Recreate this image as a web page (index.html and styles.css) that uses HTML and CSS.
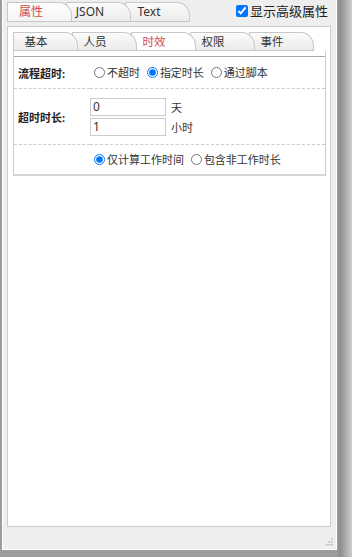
FILE: index.html
```html
<!DOCTYPE html>
<html lang="zh">
<head>
  <meta charset="UTF-8" />
  <title>属性</title>
  <link rel="stylesheet" href="styles.css">
</head>
<body>
  <div class="dialog">
    <div class="top">
      <div class="tabs">
        <span class="tab active">属性</span>
        <span class="tab">JSON</span>
        <span class="tab">Text</span>
      </div>
      <label class="adv"><input type="checkbox" checked>显示高级属性</label>
    </div>

    <div class="panel">
      <div class="tabs inner">
        <span class="tab">基本</span>
        <span class="tab">人员</span>
        <span class="tab active">时效</span>
        <span class="tab">权限</span>
        <span class="tab">事件</span>
      </div>

      <div class="tab-body">
        <table class="form">
          <tr class="row-1">
            <th>流程超时:</th>
            <td>
              <label class="opt"><input type="radio" name="timeout">不超时</label>
              <label class="opt"><input type="radio" name="timeout" checked>指定时长</label>
              <label class="opt"><input type="radio" name="timeout">通过脚本</label>
            </td>
          </tr>
          <tr class="row-2">
            <th>超时时长:</th>
            <td>
              <div class="dur"><input type="text" value="0"><span>天</span></div>
              <div class="dur"><input type="text" value="1"><span>小时</span></div>
            </td>
          </tr>
          <tr class="row-3">
            <th></th>
            <td>
              <label class="opt"><input type="radio" name="work" checked>仅计算工作时间</label>
              <label class="opt"><input type="radio" name="work">包含非工作时长</label>
            </td>
          </tr>
        </table>
      </div>
    </div>

    <div class="status">
      <svg class="grip" width="8" height="8" viewBox="0 0 8 8">
        <rect x="6" y="0" width="1.5" height="1.5" fill="#b5b5b5"/>
        <rect x="3.5" y="3" width="1.5" height="1.5" fill="#b5b5b5"/>
        <rect x="6" y="3" width="1.5" height="1.5" fill="#b5b5b5"/>
        <rect x="1" y="6" width="1.5" height="1.5" fill="#b5b5b5"/>
        <rect x="3.5" y="6" width="1.5" height="1.5" fill="#b5b5b5"/>
        <rect x="6" y="6" width="1.5" height="1.5" fill="#b5b5b5"/>
      </svg>
    </div>
  </div>
</body>
</html>
```

FILE: styles.css
```css
html, body {
  margin: 0;
  height: 557px;
  overflow: hidden;
}

body {
  font-family: "Noto Sans", "Noto Sans CJK SC", sans-serif;
  font-size: 12px;
  color: #333;
  background: linear-gradient(to right, #9c9c9c 337px, #8e8e8e 340px, #cdcdcd 352px);
}

.dialog {
  box-sizing: border-box;
  margin-left: 2px;
  width: 335px;
  height: 550px;
  border: 1px solid #fff;
  border-top: none;
  background-color: #eee;
  display: flex;
  flex-direction: column;
}

/* tabs */
.top {
  height: 26px;
  display: flex;
  align-items: flex-start;
  padding-left: 4px;
  flex-shrink: 0;
}

.tabs {
  display: flex;
  margin-top: 2px;
}

.tab {
  box-sizing: border-box;
  position: relative;
  width: 65px;
  height: 20px;
  padding-right: 17px;
  border: 1px solid #c8c8c8;
  border-top-right-radius: 13px 14px;
  background: linear-gradient(#fbfbfb, #ebebeb);
  line-height: 18px;
  text-align: center;
  color: #333;
  white-space: nowrap;
}

.tab + .tab {
  margin-left: -6px;
}

.tab:nth-child(1) { z-index: 5; }
.tab:nth-child(2) { z-index: 4; }
.tab:nth-child(3) { z-index: 3; }
.tab:nth-child(4) { z-index: 2; }
.tab:nth-child(5) { z-index: 1; }

.tab.active {
  color: #d04a4a;
  background: linear-gradient(#fff, #f3f3f3);
}

.adv {
  margin: 3px 8px 0 auto;
  display: flex;
  align-items: center;
  font-size: 13px;
  line-height: 16px;
  color: #222;
}

.adv input {
  width: 12px;
  height: 12px;
  margin: 0 2px 0 0;
}

/* panel */
.panel {
  flex: 1;
  margin: 0 5px 0 4px;
  padding: 5px 4px 0 5px;
  background-color: #fff;
  border: 1px solid #ccc;
}

.tabs.inner {
  margin-top: 0;
}

.inner .tab {
  height: 19px;
  padding-right: 19px;
  line-height: 17px;
  font-size: 11.5px;
}

.inner .tab.active {
  background: #fff;
}

.tab-body {
  border-left: 1px solid #ccc;
  border-right: 1px solid #ccc;
  padding-top: 5px;
}

.form {
  width: 100%;
  border-collapse: collapse;
  border-top: 1px solid #a8a8a8;
  border-bottom: 2px solid #d6d6d6;
}

.form tr {
  border-bottom: 1px dashed #ccc;
}

.form tr:last-child {
  border-bottom: none;
}

.form th {
  width: 72px;
  padding: 0 0 0 4px;
  text-align: left;
  font-size: 11px;
  font-weight: bold;
  color: #222;
}

.form td {
  padding: 0;
  font-size: 11px;
}

.row-1 { height: 32px; }
.row-2 { height: 56px; }
.row-3 { height: 30px; }

.opt {
  display: inline-flex;
  align-items: center;
  margin-right: 0;
  color: #333;
}

.opt input {
  width: 11px;
  height: 11px;
  margin: 0 2px 0 4px;
}

.dur {
  display: flex;
  align-items: center;
  margin: 2px 0;
}

.dur input {
  box-sizing: border-box;
  width: 76px;
  height: 18px;
  margin: 0;
  padding: 0 2px;
  border: 1px solid #ccc;
  font-family: "Noto Sans", sans-serif;
  font-size: 12px;
  color: #333;
}

.dur span {
  margin-left: 5px;
  font-size: 11px;
}

/* status bar */
.status {
  height: 22px;
  flex-shrink: 0;
  display: flex;
  justify-content: flex-end;
  align-items: flex-end;
}

.grip {
  margin: 0 3px 3px 0;
}
```
